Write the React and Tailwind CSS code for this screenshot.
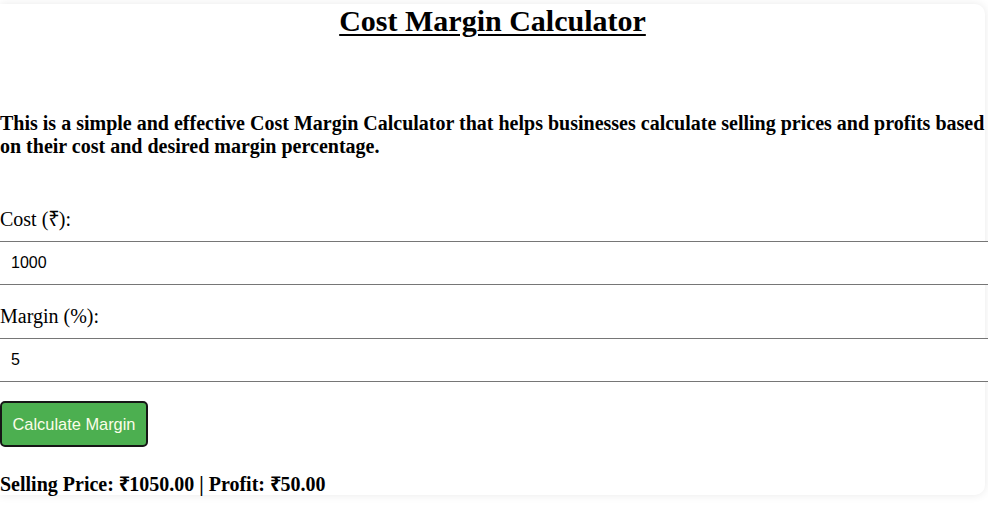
export default function App() {
  const serif = { fontFamily: '"Liberation Serif", "Times New Roman", "DejaVu Serif", serif' };
  const sans = { fontFamily: '"Liberation Sans", Arial, sans-serif' };
  const rupee = (
    <span className="tracking-[-1px]" style={{ fontFamily: '"Noto Sans", "DejaVu Sans", sans-serif' }}>₹</span>
  );
  return (
    <div className="min-h-screen w-full overflow-hidden bg-white pt-[4px]" style={serif}>
      <div className="relative h-[491px] w-[985px] rounded-r-[10px] bg-white text-black shadow-[0_0_10px_rgba(0,0,0,0.09)]">
        <h1 className="h-[34px] text-center text-[30px] font-bold leading-[34px] underline decoration-[2px] underline-offset-[3px]">
          Cost Margin Calculator
        </h1>
        <p className="mt-[74px] text-[20px] font-bold leading-[23px]">
          This is a simple and effective Cost Margin Calculator that helps businesses calculate selling prices and profits based on their cost and desired margin percentage.
        </p>
        <div className="mt-[49px] h-[23px] text-[20px] leading-[23px]">Cost ({rupee}):</div>
        <input
          readOnly
          value="1000"
          className="mt-[11px] block h-[44px] w-[1000px] border-y border-x-0 border-[#767676] bg-white pl-[11px] text-[16px] text-black outline-none"
          style={sans}
        />
        <div className="mt-[20px] h-[23px] text-[20px] leading-[23px]">Margin (%):</div>
        <input
          readOnly
          value="5"
          className="mt-[10px] block h-[44px] w-[1000px] border-y border-x-0 border-[#767676] bg-white pl-[11px] text-[16px] text-black outline-none"
          style={sans}
        />
        <button
          className="mt-[19px] block h-[46px] w-[148px] rounded-[5px] border-2 border-[#161616] bg-[#4caf50] text-[16.4px] text-[#fbfde8]"
          style={sans}
        >
          Calculate Margin
        </button>
        <div className="mt-[25px] h-[23px] whitespace-nowrap text-[20px] font-bold leading-[23px]">
          Selling Price: {rupee}1050.00 | Profit: {rupee}50.00
        </div>
      </div>
    </div>
  );
}
